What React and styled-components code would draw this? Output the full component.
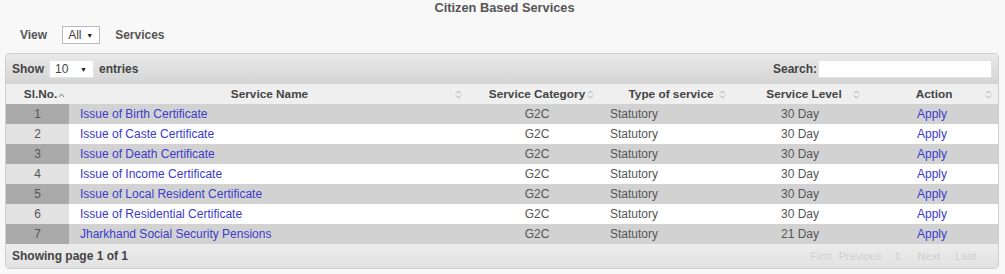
import React from "react";
import styled, { createGlobalStyle } from "styled-components";

const Global = createGlobalStyle`
  html, body { margin: 0; padding: 0; background: #f8f8f8; }
  body { font-family: "Liberation Sans", Arial, sans-serif; color: #444; }
`;

const Page = styled.div`
  width: 1005px;
  height: 274px;
  box-sizing: border-box;
  padding-top: 1px;
`;

const Title = styled.div`
  text-align: center;
  font-size: 12.8px;
  font-weight: bold;
  color: #555;
  line-height: 14px;
  padding-left: 4px;
`;

const ViewBar = styled.div`
  display: flex;
  align-items: center;
  gap: 15px;
  height: 20px;
  margin-top: 10px;
  padding-left: 20px;
  font-size: 12px;
  font-weight: bold;
  color: #555;
`;

const SelectBox = styled.div`
  display: inline-flex;
  align-items: center;
  justify-content: space-between;
  box-sizing: border-box;
  width: ${p => p.$w}px;
  height: 18px;
  padding: 0 6px 0 5px;
  background: #fff;
  border: 1px solid ${p => (p.$bordered ? "#bbb" : "#e4e4e4")};
  font-size: 12px;
  font-weight: normal;
  color: #444;
`;

const Caret = styled.span`
  font-size: 7px;
  color: #222;
`;

const Panel = styled.div`
  margin: 8px 6px 0 5px;
  border: 1px solid #cfcfcf;
  border-radius: 4px;
  overflow: hidden;
  background: #f2f2f2;
`;

const Toolbar = styled.div`
  display: flex;
  align-items: center;
  justify-content: space-between;
  height: 30px;
  padding: 0 6px 0 6px;
  background: linear-gradient(#e9e9e9, #d4d4d4);
  font-size: 12px;
  font-weight: bold;
  color: #444;
`;

const Group = styled.div`
  display: flex;
  align-items: center;
  gap: ${p => p.$gap || 5}px;
`;

const SearchInput = styled.div`
  width: 172px;
  height: 16px;
  background: #fff;
  border: 1px solid #e2e2e2;
`;

const Table = styled.table`
  width: 100%;
  border-collapse: collapse;
  table-layout: fixed;
  font-size: 12px;
`;

const Th = styled.th`
  position: relative;
  height: 20px;
  padding: 0;
  background: #efefef;
  font-size: 11.8px;
  font-weight: bold;
  color: #444;
  text-align: center;
  white-space: nowrap;
`;

const SortIcon = styled.svg`
  position: absolute;
  top: ${p => p.$top || 6}px;
  right: ${p => p.$r}px;
`;

const HeadLabel = styled.span`
  position: relative;
  left: ${p => p.$shift || 0}px;
`;

const Tr = styled.tr`
  height: 20px;
  background: ${p => (p.$odd ? "#d2d2d2" : "#ffffff")};
`;

const Td = styled.td`
  padding: 0 ${p => p.$pr || 0}px 0 ${p => p.$pl || 0}px;
  text-align: ${p => p.$align || "center"};
  color: #555;
  white-space: nowrap;
  overflow: hidden;
  background: ${p =>
    p.$sorted ? (p.$odd ? "#aaaaaa" : "#e2e2e2") : "transparent"};
`;

const Link = styled.a`
  color: #3b3bcc;
  text-decoration: none;
`;

const Footer = styled.div`
  display: flex;
  align-items: center;
  justify-content: space-between;
  height: 24px;
  padding: 0 18px 0 6px;
  background: linear-gradient(#ececec, #e2e2e2);
  font-size: 12px;
  font-weight: bold;
  color: #444;
`;

const Pager = styled.div`
  display: flex;
  gap: 7px;
  font-size: 11px;
  font-weight: normal;
  color: #cfcfcf;
`;

const PageBtn = styled.span`
  padding: 0 ${p => p.$pad || 0}px;
`;

const columns = [
  { label: "Sl.No.", w: 63, r: 4, up: true, shift: 3 },
  { label: "Service Name", w: 401, r: 8 },
  { label: "Service Category", w: 134, r: 10 },
  { label: "Type of service", w: 134, r: 12 },
  { label: "Service Level", w: 132, r: 10 },
  { label: "Action", w: 128, r: 6 },
];

const rows = [
  ["Issue of Birth Certificate", "30 Day"],
  ["Issue of Caste Certificate", "30 Day"],
  ["Issue of Death Certificate", "30 Day"],
  ["Issue of Income Certificate", "30 Day"],
  ["Issue of Local Resident Certificate", "30 Day"],
  ["Issue of Residential Certificate", "30 Day"],
  ["Jharkhand Social Security Pensions", "21 Day"],
];

export default function App() {
  return (
    <Page>
      <Global />
      <Title>Citizen Based Services</Title>
      <ViewBar>
        <span>View</span>
        <SelectBox $w={38} $bordered>
          <span>All</span>
          <Caret>▼</Caret>
        </SelectBox>
        <span>Services</span>
      </ViewBar>
      <Panel>
        <Toolbar>
          <Group>
            <span>Show</span>
            <SelectBox $w={45}>
              <span>10</span>
              <Caret>▼</Caret>
            </SelectBox>
            <span>entries</span>
          </Group>
          <Group $gap={1}>
            <span>Search:</span>
            <SearchInput />
          </Group>
        </Toolbar>
        <Table>
          <colgroup>
            {columns.map(c => (
              <col key={c.label} style={{ width: c.w }} />
            ))}
          </colgroup>
          <thead>
            <tr>
              {columns.map(c => (
                <Th key={c.label}>
                  <HeadLabel $shift={c.shift}>{c.label}</HeadLabel>
                  {c.up ? (
                    <SortIcon width="7" height="6" viewBox="0 0 7 6" $r={c.r} $top={8}>
                      <path d="M1 5 L3.5 2 L6 5" fill="none" stroke="#777" strokeWidth="1" />
                    </SortIcon>
                  ) : (
                    <SortIcon width="7" height="9" viewBox="0 0 7 9" $r={c.r}>
                      <path d="M1 3.5 L3.5 1 L6 3.5 M1 5.5 L3.5 8 L6 5.5" fill="none" stroke="#aaa" strokeWidth="1" />
                    </SortIcon>
                  )}
                </Th>
              ))}
            </tr>
          </thead>
          <tbody>
            {rows.map((r, i) => {
              const odd = i % 2 === 0;
              return (
                <Tr key={r[0]} $odd={odd}>
                  <Td $sorted $odd={odd}>{i + 1}</Td>
                  <Td $align="left" $pl={11}>
                    <Link href="#">{r[0]}</Link>
                  </Td>
                  <Td>G2C</Td>
                  <Td $align="left" $pl={6}>Statutory</Td>
                  <Td $pr={8}>{r[1]}</Td>
                  <Td $pr={4}>
                    <Link href="#">Apply</Link>
                  </Td>
                </Tr>
              );
            })}
          </tbody>
        </Table>
        <Footer>
          <span>Showing page 1 of 1</span>
          <Pager>
            <PageBtn>First</PageBtn>
            <PageBtn>Previous</PageBtn>
            <PageBtn $pad={6}>1</PageBtn>
            <PageBtn $pad={4}>Next</PageBtn>
            <PageBtn $pad={4}>Last</PageBtn>
          </Pager>
        </Footer>
      </Panel>
    </Page>
  );
}
